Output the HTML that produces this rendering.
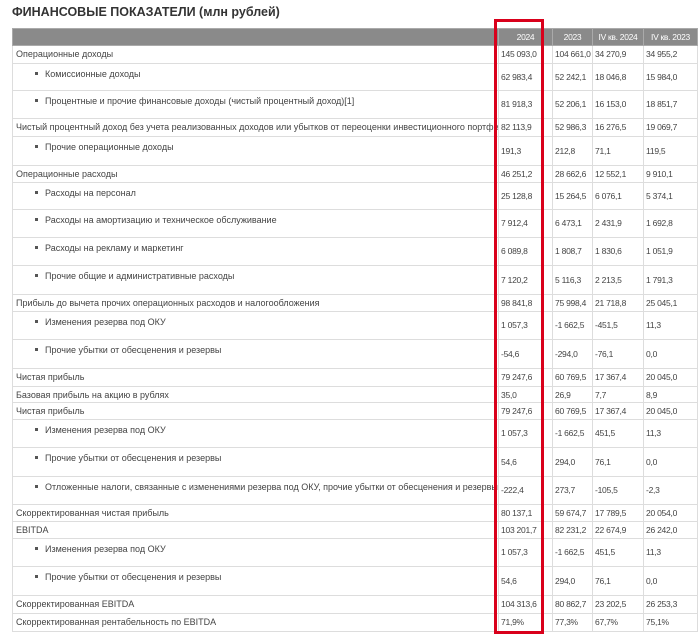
<!DOCTYPE html>
<html><head><meta charset="utf-8">
<style>
body{margin:0;background:#fff;width:700px;height:640px;overflow:hidden;font-family:"Liberation Sans","DejaVu Sans",sans-serif;color:#444;position:relative}
h1{position:absolute;left:12px;top:5px;margin:0;font-size:12.5px;font-weight:bold;color:#333}
table{position:absolute;left:12px;top:28px;border-collapse:collapse;table-layout:fixed;width:685px;font-size:8.5px;letter-spacing:-0.25px}
td{border:1px solid #ddd;padding:0 2px;vertical-align:top;line-height:11px;white-space:nowrap;overflow:hidden}
td.l{padding-left:3px;font-size:9px;letter-spacing:0}
td.v{vertical-align:middle}
tr.b td.l{padding-left:22px}
tr.b td.l::before{content:"";display:inline-block;width:3px;height:3px;background:#555;margin-right:7px;vertical-align:2px}
tr.b td.l{padding-top:5px}
tr.s td{padding-top:3px}
th{background:#8a8a8a;color:#fff;font-weight:normal;font-size:8.5px;height:16px;border:1px solid #aaa;padding:0 1px;text-align:center;white-space:nowrap;overflow:hidden;letter-spacing:-0.3px}
.red{position:absolute;left:494px;top:19px;width:44px;height:609px;border:3px solid #d9001b}
</style></head><body>
<h1>ФИНАНСОВЫЕ ПОКАЗАТЕЛИ (млн рублей)</h1>
<table>
<colgroup><col style="width:486px"><col style="width:54px"><col style="width:40px"><col style="width:51px"><col style="width:54px"></colgroup>
<tr><th></th><th>2024</th><th>2023</th><th>IV кв. 2024</th><th>IV кв. 2023</th></tr>
<tr class="s" style="height:18px"><td class="l">Операционные доходы</td><td>145 093,0</td><td>104 661,0</td><td>34 270,9</td><td>34 955,2</td></tr>
<tr class="b" style="height:27px"><td class="l">Комиссионные доходы</td><td class="v">62 983,4</td><td class="v">52 242,1</td><td class="v">18 046,8</td><td class="v">15 984,0</td></tr>
<tr class="b" style="height:28px"><td class="l">Процентные и прочие финансовые доходы (чистый процентный доход)[1]</td><td class="v">81 918,3</td><td class="v">52 206,1</td><td class="v">16 153,0</td><td class="v">18 851,7</td></tr>
<tr class="s" style="height:18px"><td class="l">Чистый процентный доход без учета реализованных доходов или убытков от переоценки инвестиционного портфеля[2]</td><td>82 113,9</td><td>52 986,3</td><td>16 276,5</td><td>19 069,7</td></tr>
<tr class="b" style="height:29px"><td class="l">Прочие операционные доходы</td><td class="v">191,3</td><td class="v">212,8</td><td class="v">71,1</td><td class="v">119,5</td></tr>
<tr class="s" style="height:17px"><td class="l">Операционные расходы</td><td>46 251,2</td><td>28 662,6</td><td>12 552,1</td><td>9 910,1</td></tr>
<tr class="b" style="height:27px"><td class="l">Расходы на персонал</td><td class="v">25 128,8</td><td class="v">15 264,5</td><td class="v">6 076,1</td><td class="v">5 374,1</td></tr>
<tr class="b" style="height:28px"><td class="l">Расходы на амортизацию и техническое обслуживание</td><td class="v">7 912,4</td><td class="v">6 473,1</td><td class="v">2 431,9</td><td class="v">1 692,8</td></tr>
<tr class="b" style="height:28px"><td class="l">Расходы на рекламу и маркетинг</td><td class="v">6 089,8</td><td class="v">1 808,7</td><td class="v">1 830,6</td><td class="v">1 051,9</td></tr>
<tr class="b" style="height:29px"><td class="l">Прочие общие и административные расходы</td><td class="v">7 120,2</td><td class="v">5 116,3</td><td class="v">2 213,5</td><td class="v">1 791,3</td></tr>
<tr class="s" style="height:17px"><td class="l">Прибыль до вычета прочих операционных расходов и налогообложения</td><td>98 841,8</td><td>75 998,4</td><td>21 718,8</td><td>25 045,1</td></tr>
<tr class="b" style="height:28px"><td class="l">Изменения резерва под ОКУ</td><td class="v">1 057,3</td><td class="v">-1 662,5</td><td class="v">-451,5</td><td class="v">11,3</td></tr>
<tr class="b" style="height:29px"><td class="l">Прочие убытки от обесценения и резервы</td><td class="v">-54,6</td><td class="v">-294,0</td><td class="v">-76,1</td><td class="v">0,0</td></tr>
<tr class="s" style="height:18px"><td class="l">Чистая прибыль</td><td>79 247,6</td><td>60 769,5</td><td>17 367,4</td><td>20 045,0</td></tr>
<tr class="s" style="height:16px"><td class="l">Базовая прибыль на акцию в рублях</td><td>35,0</td><td>26,9</td><td>7,7</td><td>8,9</td></tr>
<tr class="s" style="height:17px"><td class="l">Чистая прибыль</td><td>79 247,6</td><td>60 769,5</td><td>17 367,4</td><td>20 045,0</td></tr>
<tr class="b" style="height:28px"><td class="l">Изменения резерва под ОКУ</td><td class="v">1 057,3</td><td class="v">-1 662,5</td><td class="v">451,5</td><td class="v">11,3</td></tr>
<tr class="b" style="height:29px"><td class="l">Прочие убытки от обесценения и резервы</td><td class="v">54,6</td><td class="v">294,0</td><td class="v">76,1</td><td class="v">0,0</td></tr>
<tr class="b" style="height:28px"><td class="l">Отложенные налоги, связанные с изменениями резерва под ОКУ, прочие убытки от обесценения и резервы</td><td class="v">-222,4</td><td class="v">273,7</td><td class="v">-105,5</td><td class="v">-2,3</td></tr>
<tr class="s" style="height:17px"><td class="l">Скорректированная чистая прибыль</td><td>80 137,1</td><td>59 674,7</td><td>17 789,5</td><td>20 054,0</td></tr>
<tr class="s" style="height:17px"><td class="l">EBITDA</td><td>103 201,7</td><td>82 231,2</td><td>22 674,9</td><td>26 242,0</td></tr>
<tr class="b" style="height:28px"><td class="l">Изменения резерва под ОКУ</td><td class="v">1 057,3</td><td class="v">-1 662,5</td><td class="v">451,5</td><td class="v">11,3</td></tr>
<tr class="b" style="height:29px"><td class="l">Прочие убытки от обесценения и резервы</td><td class="v">54,6</td><td class="v">294,0</td><td class="v">76,1</td><td class="v">0,0</td></tr>
<tr class="s" style="height:18px"><td class="l">Скорректированная EBITDA</td><td>104 313,6</td><td>80 862,7</td><td>23 202,5</td><td>26 253,3</td></tr>
<tr class="s" style="height:18px"><td class="l">Скорректированная рентабельность по EBITDA</td><td>71,9%</td><td>77,3%</td><td>67,7%</td><td>75,1%</td></tr>
</table>
<div class="red"></div>
</body></html>
